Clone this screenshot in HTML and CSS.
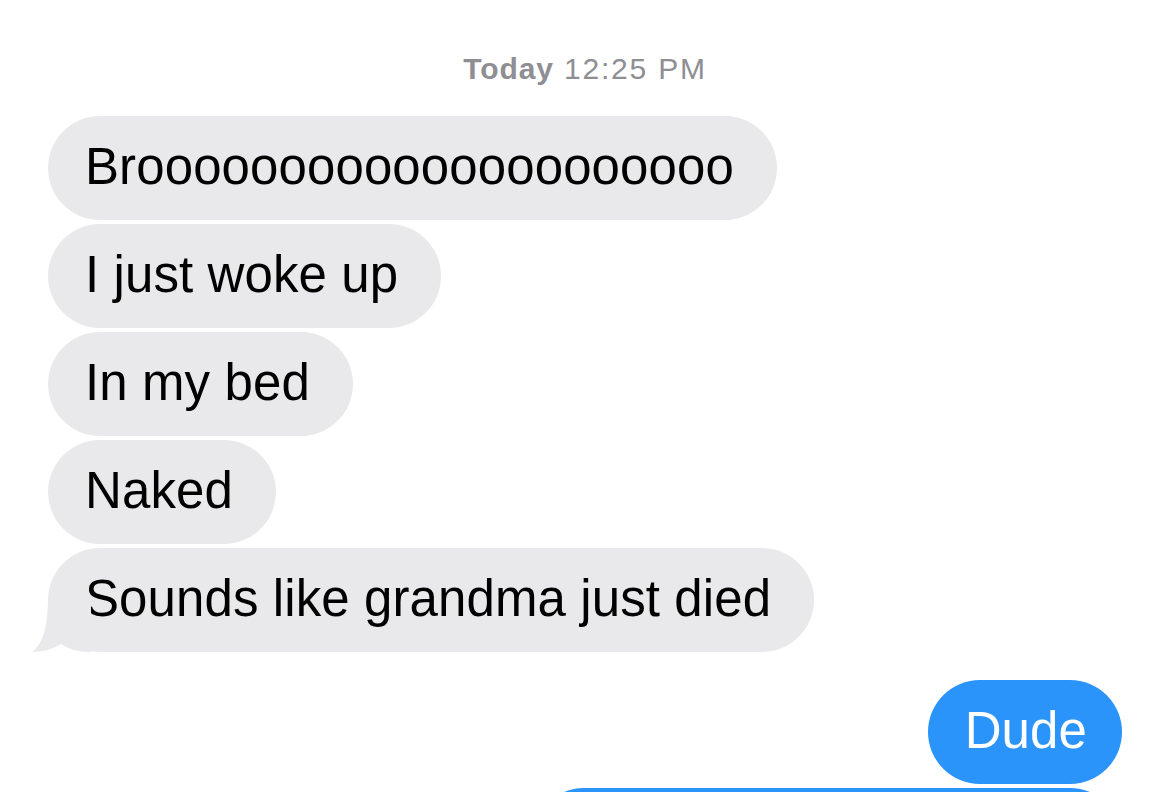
FILE: index.html
```html
<!DOCTYPE html>
<html lang="en">
<head>
<meta charset="utf-8">
<title>Messages</title>
<link rel="stylesheet" href="styles.css">
</head>
<body>
<main class="thread">
  <div class="timestamp"><span class="day">Today</span> 12:25 PM</div>
  <div class="group them">
    <div class="bubble gray">Brooooooooooooooooooooo</div>
    <div class="bubble gray">I just woke up</div>
    <div class="bubble gray">In my bed</div>
    <div class="bubble gray">Naked</div>
    <div class="bubble gray tailed">Sounds like grandma just died<svg class="tail" width="60" height="60" viewBox="0 0 60 60" aria-hidden="true"><path d="M17 6 C17 34 12 52 1 60 C12 60 22 57 30 52 C38 57 46 60 60 60 L60 6 Z" fill="#e9e9eb"/></svg></div>
  </div>
  <div class="group me">
    <div class="bubble blue">Dude</div>
    <div class="bubble blue wide"></div>
  </div>
</main>
</body>
</html>
```
FILE: styles.css
```css
html, body {
  margin: 0;
  padding: 0;
  background: #ffffff;
  overflow: hidden;
}

body {
  width: 1170px;
  height: 792px;
  font-family: "Liberation Sans", Arial, sans-serif;
}

.thread {
  display: flex;
  flex-direction: column;
  padding: 52px 48px 0 48px;
}

.timestamp {
  text-align: center;
  color: #8e8e93;
  font-size: 30px;
  line-height: 34px;
  letter-spacing: 1.8px;
  margin-bottom: 30px;
}

.timestamp .day {
  font-weight: 700;
  letter-spacing: 0.9px;
}

.group {
  display: flex;
  flex-direction: column;
  gap: 4px;
}

.group.them {
  align-items: flex-start;
}

.group.me {
  align-items: flex-end;
  margin-top: 28px;
}

.bubble {
  position: relative;
  box-sizing: border-box;
  height: 104px;
  padding: 21px 43px 23px 37px;
  border-radius: 52px;
  font-size: 51px;
  line-height: 60px;
  letter-spacing: 0.1px;
  white-space: nowrap;
}

.bubble.gray {
  background: #e9e9eb;
  color: #000000;
}

.bubble.blue {
  background: #2a94fa;
  color: #ffffff;
  padding-right: 35px;
}

.bubble.wide {
  width: 590px;
}

.tail {
  position: absolute;
  left: -17px;
  bottom: 0;
  display: block;
}
```
